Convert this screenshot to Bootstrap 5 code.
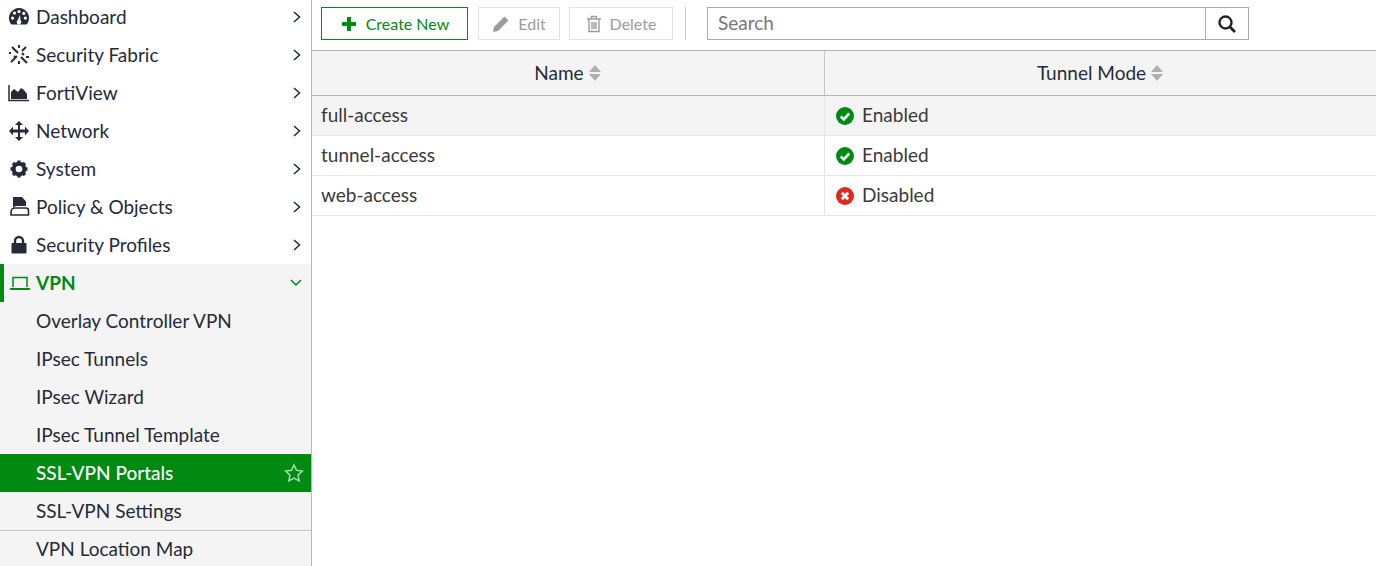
<!DOCTYPE html>
<html lang="en"><head><meta charset="utf-8"><title>SSL-VPN Portals</title>
<link href="https://cdn.jsdelivr.net/npm/bootstrap@5.3.0/dist/css/bootstrap.min.css" rel="stylesheet">
<style>
html,body{height:566px;overflow:hidden}
body{font-family:Lato,"Liberation Sans",sans-serif;font-size:19px;color:#262b3a;background:#fff}
.fg-shell{height:566px}
.fg-side{width:312px;flex:none;border-right:1px solid #b9b9b9;margin-top:-2px;overflow:hidden}
.fg-item{height:38px;padding-left:36px;padding-right:9px;position:relative}
.fg-ico{position:absolute;left:8px;top:9px;width:22px;height:20px;color:#262b3a}
.fg-chev{margin-left:auto;width:10px;height:14px;flex:none}
.fg-open{background:#f4f4f4;border-left:4px solid #008a12;padding-left:32px;color:#008a12;font-weight:700}
.fg-open .fg-ico{left:5px;color:#008a12}
.fg-open .fg-chev{width:14px;height:10px;margin-right:-1px}
.fg-sub{background:#f4f4f4}
.fg-active{background:#008a12;color:#fff;font-weight:500;border-top:0}
.fg-line{border-top:1px solid #c9c9c9}
.fg-main{min-width:0}
.fg-bar{height:51px;border-bottom:1px solid #b3b3b3;padding:7px 0 0 9px;gap:10px}
.fg-btn{height:33px;border:1px solid #e2e2e2;border-radius:0;padding:0;color:#9c9c9c;background:#fff}
.fg-create{width:147px;border-color:#008a12;color:#008a12}
.fg-edit{width:82px}
.fg-del{width:104px;margin-left:-1px}
.fg-vr{width:1px;height:33px;background:#c9c9c9;margin:0 11px 0 2px}
.fg-search{width:542px;height:33px;border:1px solid #ababab;margin-left:0}
.fg-search input{border:0;outline:0;flex:1;min-width:0;padding:0 10px;font:inherit;color:#262b3a;background:transparent}
.fg-search input::placeholder{color:#777;opacity:1}
.fg-sbtn{width:43px;border-left:1px solid #ababab}
.fg-grid{display:grid;grid-template-columns:512px 1fr}
.fg-head{height:45px;background:#f4f4f4;border-bottom:1px solid #b3b3b3}
.fg-head>div+div{border-left:1px solid #c4c4c4}
.fg-row{height:40px;border-bottom:1px solid #e4e4e4;color:#3a3a3a}
.fg-row>div{padding-left:9px}
.fg-row>div+div{border-left:1px solid #e4e4e4;padding-left:11px}
.fg-sel{background:#f4f4f4}
.fg-status{width:18px;height:18px;margin-right:8px;flex:none}
</style></head>
<body>
<div class="d-flex fg-shell">
<nav class="fg-side">
<div class="fg-item d-flex align-items-center"><svg class="fg-ico" viewBox="0 0 22 20"><path fill="currentColor" fill-rule="evenodd" d="M11 1a10 10 0 0 0-9.2 14c.3.8 1.1 2.600 2 2.600h14.400c.9 0 1.700-1.800 2-2.600A10 10 0 0 0 11 1zM6.500 4.500a1.600 1.600 0 1 1 0 3.200 1.600 1.600 0 0 1 0-3.200zM11 3a1.600 1.600 0 1 1 0 3.200A1.600 1.600 0 0 1 11 3zm4.800 1.800a1.600 1.600 0 1 1 0 3.200 1.600 1.600 0 0 1 0-3.200zM4.600 9.500a1.600 1.600 0 1 1 0 3.200 1.600 1.600 0 0 1 0-3.200zM12 8l.5 5.500a2.200 2.200 0 1 1-3 0zm5.400 1.500a1.600 1.600 0 1 1 0 3.200 1.600 1.600 0 0 1 0-3.200z"/></svg>Dashboard<svg class="fg-chev" viewBox="0 0 10 14"><path d="M2 2l5.500 5L2 12" fill="none" stroke="#262b3a" stroke-width="1.500"/></svg></div>
<div class="fg-item d-flex align-items-center"><svg class="fg-ico" viewBox="0 0 22 20"><g stroke="currentColor" stroke-width="2" fill="none"><path d="M4 2l6 6M13 12l6 6M18 2l-4 4M9 11l-6 6M11 0v3M11 16v3M1 8h2M18 12h3M14 8l2 2M6 11l2 2"/></g></svg>Security Fabric<svg class="fg-chev" viewBox="0 0 10 14"><path d="M2 2l5.500 5L2 12" fill="none" stroke="#262b3a" stroke-width="1.500"/></svg></div>
<div class="fg-item d-flex align-items-center"><svg class="fg-ico" viewBox="0 0 22 20"><path fill="currentColor" d="M3 16V9l3-3 4 3 3-4 3 2 3 4v5z"/><path fill="none" stroke="currentColor" stroke-width="1.500" d="M1 2v15.500h20"/></svg>FortiView<svg class="fg-chev" viewBox="0 0 10 14"><path d="M2 2l5.500 5L2 12" fill="none" stroke="#262b3a" stroke-width="1.500"/></svg></div>
<div class="fg-item d-flex align-items-center"><svg class="fg-ico" viewBox="0 0 22 20"><path fill="currentColor" d="M11 0l4 4h-3v4.500h5V5.500l4 4.500-4 4.500v-3h-5V16h3l-4 4-4-4h3v-4.500H5v3L1 10l4-4.500v3h5V4H7z"/></svg>Network<svg class="fg-chev" viewBox="0 0 10 14"><path d="M2 2l5.500 5L2 12" fill="none" stroke="#262b3a" stroke-width="1.500"/></svg></div>
<div class="fg-item d-flex align-items-center"><svg class="fg-ico" viewBox="0 0 22 20"><circle cx="11" cy="10" r="5.300" fill="none" stroke="currentColor" stroke-width="4"/><path stroke="currentColor" stroke-width="3.400" d="M11 1.500v3M11 15.500v3M2.500 10h3M16.500 10h3M5 4l2.200 2.200M14.800 13.800L17 16M17 4l-2.200 2.200M7.200 13.800L5 16"/></svg>System<svg class="fg-chev" viewBox="0 0 10 14"><path d="M2 2l5.500 5L2 12" fill="none" stroke="#262b3a" stroke-width="1.500"/></svg></div>
<div class="fg-item d-flex align-items-center"><svg class="fg-ico" viewBox="0 0 22 20"><path fill="currentColor" d="M5 0h9l4 4.500V9H9a4 4 0 0 0-4 3z"/><path fill="none" stroke="currentColor" stroke-width="1.600" d="M3 18v-3a4 4 0 0 1 4-4h11c1.500 0 2.500 1 2.500 2.500V18z"/></svg>Policy &amp; Objects<svg class="fg-chev" viewBox="0 0 10 14"><path d="M2 2l5.500 5L2 12" fill="none" stroke="#262b3a" stroke-width="1.500"/></svg></div>
<div class="fg-item d-flex align-items-center"><svg class="fg-ico" viewBox="0 0 22 20"><path fill="currentColor" d="M4.500 8h13c.6 0 1 .4 1 1v8.500c0 .6-.4 1-1 1h-13c-.6 0-1-.4-1-1V9c0-.6.4-1 1-1z"/><path fill="none" stroke="currentColor" stroke-width="2.400" d="M7 9V6a4 4 0 0 1 8 0v3"/></svg>Security Profiles<svg class="fg-chev" viewBox="0 0 10 14"><path d="M2 2l5.500 5L2 12" fill="none" stroke="#262b3a" stroke-width="1.500"/></svg></div>
<div class="fg-item fg-open d-flex align-items-center"><svg class="fg-ico" viewBox="0 0 22 20"><path fill="none" stroke="currentColor" stroke-width="1.500" d="M4 14V4.500h14V14"/><path fill="currentColor" d="M1 15h20v1c0 .6-.4 1-1 1H2c-.6 0-1-.4-1-1z"/></svg>VPN<svg class="fg-chev" viewBox="0 0 14 10"><path d="M2 2l5 5 5-5" fill="none" stroke="#008a12" stroke-width="1.500"/></svg></div>
<div class="fg-item fg-sub d-flex align-items-center">Overlay Controller VPN</div>
<div class="fg-item fg-sub d-flex align-items-center">IPsec Tunnels</div>
<div class="fg-item fg-sub d-flex align-items-center">IPsec Wizard</div>
<div class="fg-item fg-sub d-flex align-items-center">IPsec Tunnel Template</div>
<div class="fg-item fg-active d-flex align-items-center">SSL-VPN Portals<svg class="ms-auto" width="20" height="20" viewBox="0 0 20 20" style="margin-right:-2px"><path d="M10 2l2.500 5.300 5.800.8-4.200 4 1 5.800L10 15.100l-5.100 2.800 1-5.800-4.200-4 5.800-.8z" fill="none" stroke="#a8d8ae" stroke-width="1.500"/></svg></div>
<div class="fg-item fg-sub d-flex align-items-center">SSL-VPN Settings</div>
<div class="fg-item fg-sub fg-line d-flex align-items-center">VPN Location Map</div>
</nav>
<main class="fg-main flex-grow-1">
<div class="fg-bar d-flex align-items-start">
<button class="btn fg-btn fg-create d-flex align-items-center justify-content-center"><svg width="18" height="18" viewBox="0 0 18 18" class="me-2"><path d="M9 2v14M2 9h14" stroke="#008a12" stroke-width="4"/></svg>Create New</button>
<button class="btn fg-btn fg-edit d-flex align-items-center justify-content-center"><svg width="18" height="18" viewBox="0 0 18 18" class="me-2"><path fill="#9c9c9c" d="M12.500 1.500l4 4L6 16l-5 1 1-5z"/></svg>Edit</button>
<button class="btn fg-btn fg-del d-flex align-items-center justify-content-center"><svg width="16" height="18" viewBox="0 0 16 18" class="me-2"><path fill="none" stroke="#9c9c9c" stroke-width="1.400" d="M1 4h14M3 4v12.500h10V4M5.500 4V1.500h5V4M6 7v7M8 7v7M10 7v7"/></svg>Delete</button>
<div class="fg-vr"></div>
<div class="fg-search d-flex">
<input type="text" placeholder="Search" aria-label="Search">
<div class="fg-sbtn d-flex align-items-center justify-content-center"><svg width="20" height="20" viewBox="0 0 20 20"><circle cx="8.500" cy="8.500" r="6" fill="none" stroke="#222" stroke-width="2.400"/><path d="M13 13l5 5" stroke="#222" stroke-width="2.800"/></svg></div>
</div>
</div>
<div class="fg-grid fg-head">
<div class="d-flex align-items-center justify-content-center">Name<svg class="ms-1" width="14" height="18" viewBox="0 0 14 18"><path fill="#b0b0b0" d="M7 1l6 7H1zM1 10h12l-6 7z"/></svg></div>
<div class="d-flex align-items-center justify-content-center">Tunnel Mode<svg class="ms-1" width="14" height="18" viewBox="0 0 14 18"><path fill="#b0b0b0" d="M7 1l6 7H1zM1 10h12l-6 7z"/></svg></div>
</div>
<div class="fg-grid fg-row fg-sel">
<div class="d-flex align-items-center">full-access</div>
<div class="d-flex align-items-center"><svg class="fg-status" viewBox="0 0 18 18"><circle cx="9" cy="9" r="9" fill="#008a12"/><path d="M4.800 9.300l3 3 5.400-5.800" fill="none" stroke="#fff" stroke-width="2.600"/></svg>Enabled</div>
</div>
<div class="fg-grid fg-row">
<div class="d-flex align-items-center">tunnel-access</div>
<div class="d-flex align-items-center"><svg class="fg-status" viewBox="0 0 18 18"><circle cx="9" cy="9" r="9" fill="#008a12"/><path d="M4.800 9.300l3 3 5.400-5.800" fill="none" stroke="#fff" stroke-width="2.600"/></svg>Enabled</div>
</div>
<div class="fg-grid fg-row">
<div class="d-flex align-items-center">web-access</div>
<div class="d-flex align-items-center"><svg class="fg-status" viewBox="0 0 18 18"><circle cx="9" cy="9" r="9" fill="#e0281c"/><path d="M5.800 5.800l6.400 6.400M12.200 5.800l-6.400 6.400" fill="none" stroke="#fff" stroke-width="2.800"/></svg>Disabled</div>
</div>
</main>
</div>
<script src="https://cdn.jsdelivr.net/npm/bootstrap@5.3.0/dist/js/bootstrap.bundle.min.js"></script>
</body></html>
